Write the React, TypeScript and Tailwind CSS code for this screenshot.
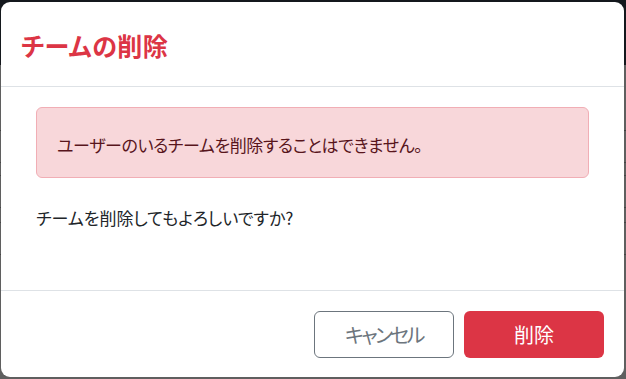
import React from "react"

const jp = "font-['Meiryo_UI','Noto_Sans_CJK_JP',sans-serif] [font-feature-settings:'palt']"

function Backdrop() {
  return (
    <div className="flex h-[379px] flex-col">
      <div className="h-[65px] bg-[#14181d]" />
      <div className="flex flex-1 flex-col bg-[#5f5f5f]">
        <div className="h-[66px] border-b border-[#3f3f3f]" />
        <div className="h-[32px] border-b border-[#454545]" />
        <div className="h-[13px] border-b border-[#454545]" />
        <div className="h-[32px] border-b border-[#454545]" />
        <div className="h-[15px] border-b border-[#454545]" />
        <div className="h-[32px] border-b border-[#454545]" />
      </div>
    </div>
  )
}

export default function App() {
  return (
    <div className={"relative h-[379px] w-[626px] overflow-hidden " + jp}>
      <Backdrop />

      {/* modal */}
      <div className="absolute left-[1px] top-[2px] flex h-[375px] w-[623px] flex-col rounded-[9px] bg-white">
        <div className="flex h-[85px] items-center border-b border-[#dee2e6] px-[20px] pt-[2px]">
          <h5 className="text-[25px] font-semibold leading-none tracking-[0.5px] text-[#dc3545]">チームの削除</h5>
        </div>

        <div className="flex flex-1 flex-col px-[35px] pt-[20px]">
          <div className="flex h-[71px] items-center rounded-[6px] border border-[#f1aeb5] bg-[#f8d7da] px-[20px] pt-[4px] text-[17px] tracking-[-0.4px] text-[#58151c]">
            ユーザーのいるチームを削除することはできません。
          </div>
          <p className="mt-[31px] text-[17px] leading-none text-[#212529]">
            チームを削除してもよろしいですか?
          </p>
        </div>

        <div className="flex h-[87px] items-center justify-end gap-[10px] border-t border-[#dee2e6] pr-[20px]">
          <button className="flex h-[47px] w-[140px] items-center justify-center rounded-[6px] border border-[#6c757d] bg-white pt-[1px] text-[20px] tracking-[-2.5px] text-[#6c757d]">
            キャンセル
          </button>
          <button className="flex h-[47px] w-[140px] items-center justify-center rounded-[6px] bg-[#dc3545] pt-[1px] text-[20px] text-white">
            削除
          </button>
        </div>
      </div>
    </div>
  )
}
